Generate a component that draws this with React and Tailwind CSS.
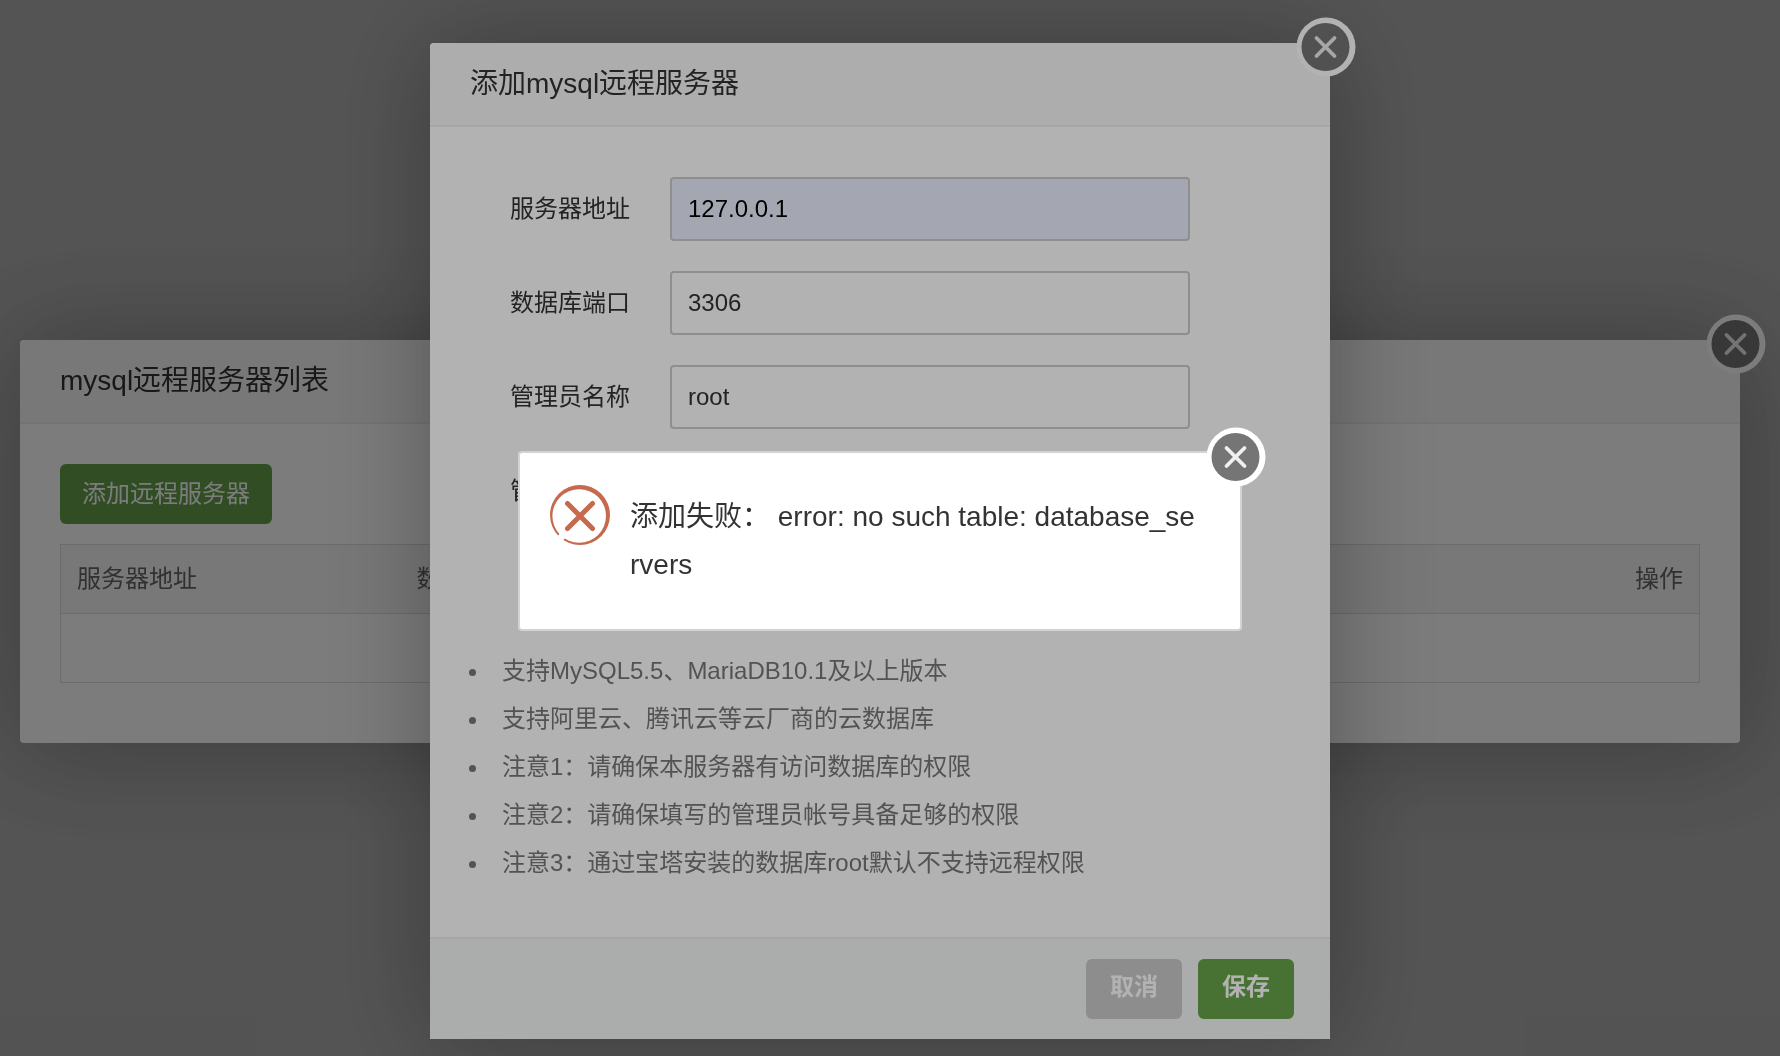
import { useState } from 'react';

const columns = ['服务器地址', '数据库端口', '管理员名称', '备注', '操作'];

const fields = [
  { name: 'host', label: '服务器地址', type: 'text', filled: true },
  { name: 'port', label: '数据库端口', type: 'text' },
  { name: 'user', label: '管理员名称', type: 'text' },
  { name: 'password', label: '管理员密码', type: 'password' },
  { name: 'remark', label: '备注', type: 'text' },
];

const tips = [
  '支持MySQL5.5、MariaDB10.1及以上版本',
  '支持阿里云、腾讯云等云厂商的云数据库',
  '注意1：请确保本服务器有访问数据库的权限',
  '注意2：请确保填写的管理员帐号具备足够的权限',
  '注意3：通过宝塔安装的数据库root默认不支持远程权限',
];

function Layer({ children }) {
  return (
    <div className="fixed inset-0 flex items-center justify-center bg-black/30 pt-[26px] pr-10 pl-5">
      {children}
    </div>
  );
}

function CloseButton({ onClick }) {
  return (
    <button
      type="button"
      aria-label="关闭"
      onClick={onClick}
      className="absolute -top-[26px] -right-[26px] size-[60px] cursor-pointer"
    >
      <svg viewBox="0 0 60 60" className="size-full">
        <circle cx="30" cy="30" r="29.5" fill="#fff" />
        <circle cx="29.5" cy="30" r="24" fill="#757575" />
        <path d="M20.5 21l18 18M38.5 21l-18 18" stroke="#f0f0f0" strokeWidth="3.8" strokeLinecap="round" />
      </svg>
    </button>
  );
}

function ErrorIcon() {
  return (
    <svg viewBox="0 0 60 60" className="size-[60px] shrink-0" aria-hidden="true">
      <path
        fill="#c6694d"
        fillRule="evenodd"
        d="M30 0a30 30 0 1 1 0 60a30 30 0 1 1 0-60zM29.2 4.2a26.8 26.8 0 1 0 0 53.6a26.8 26.8 0 1 0 0-53.6z"
      />
      <path d="M5 59l11-12" stroke="#fff" strokeWidth="7" />
      <path d="M17.5 18.5l25 25M42.5 18.5l-25 25" stroke="#c6694d" strokeWidth="5" strokeLinecap="round" />
    </svg>
  );
}

function Header({ children }) {
  return (
    <h2 className="rounded-t border-b-2 border-[#eee] bg-[#f8f8f8] px-10 py-5 text-[28px] leading-[42px] text-[#333]">
      {children}
    </h2>
  );
}

export default function App() {
  const [showForm, setShowForm] = useState(true);
  const [showError, setShowError] = useState(true);
  const [form, setForm] = useState({ host: '127.0.0.1', port: '3306', user: 'root', password: '', remark: '' });

  const handleChange = (e) => setForm({ ...form, [e.target.name]: e.target.value });

  const handleSubmit = (e) => {
    e.preventDefault();
    setShowError(true);
  };

  return (
    <div className="min-h-screen bg-[#f3f3f3] font-['Liberation_Sans','Noto_Sans_CJK_SC',sans-serif] text-2xl text-[#333]">
      {/* server list */}
      <Layer>
        <section className="relative w-full rounded bg-white shadow-[2px_2px_100px_rgba(0,0,0,0.3)]">
          <Header>mysql远程服务器列表</Header>
          <div className="px-10 pt-10 pb-[60px]">
            <button
              type="button"
              onClick={() => setShowForm(true)}
              className="h-[60px] rounded-md bg-[#65a04a] px-[22px] text-white"
            >
              添加远程服务器
            </button>
            <table className="mt-5 w-full table-fixed border-collapse border border-[#ddd]">
              <thead>
                <tr className="h-[69px] border-b border-[#ddd] bg-[#f6f6f6] text-left text-[#666]">
                  {columns.map((col) => (
                    <th key={col} className="px-4 font-normal first:w-[340px] last:text-right">
                      {col}
                    </th>
                  ))}
                </tr>
              </thead>
              <tbody>
                <tr className="h-[69px]">
                  <td colSpan={columns.length} />
                </tr>
              </tbody>
            </table>
          </div>
          <CloseButton />
        </section>
      </Layer>

      {/* add server form */}
      {showForm && (
        <Layer>
          <form
            onSubmit={handleSubmit}
            className="relative w-[900px] rounded-t bg-white shadow-[2px_2px_100px_rgba(0,0,0,0.3)]"
          >
            <Header>添加mysql远程服务器</Header>
            <div className="py-[50px]">
              <div className="flex flex-col gap-[30px]">
                {fields.map((field) => (
                  <div key={field.name} className="flex items-center">
                    <label htmlFor={field.name} className="w-[240px] pr-10 text-right">
                      {field.label}
                    </label>
                    <input
                      id={field.name}
                      name={field.name}
                      type={field.type}
                      value={form[field.name]}
                      onChange={handleChange}
                      className={
                        field.filled
                          ? 'h-16 w-[520px] rounded border-2 border-[#ccc] bg-[#ebeffe] px-4 text-black'
                          : 'h-16 w-[520px] rounded border-2 border-[#ccc] bg-white px-4'
                      }
                    />
                  </div>
                ))}
              </div>
              <ul className="mt-[30px] ml-[60px] list-disc leading-[48px] text-[#777]">
                {tips.map((tip) => (
                  <li key={tip} className="pl-3">
                    {tip}
                  </li>
                ))}
              </ul>
            </div>
            <div className="flex justify-end gap-4 border-t-2 border-[#edf0ef] bg-[#f4f8f7] py-5 pr-9 font-bold text-white">
              <button
                type="button"
                onClick={() => setShowForm(false)}
                className="h-[60px] w-24 rounded-md bg-[#cbcbcb] pb-1"
              >
                取消
              </button>
              <button type="submit" className="h-[60px] w-24 rounded-md bg-[#67a34b] pb-1">
                保存
              </button>
            </div>
            <CloseButton onClick={() => setShowForm(false)} />
          </form>
        </Layer>
      )}

      {/* error message */}
      {showError && (
        <Layer>
          <div
            role="alertdialog"
            className="relative flex w-[724px] gap-5 rounded border-2 border-[#d3d3d3] bg-white pt-8 pr-10 pb-10 pl-[30px]"
          >
            <ErrorIcon />
            <p className="mt-2 text-[28px] leading-[48px] break-all">
              添加失败： error: no such table: database_servers
            </p>
            <CloseButton onClick={() => setShowError(false)} />
          </div>
        </Layer>
      )}
    </div>
  );
}
